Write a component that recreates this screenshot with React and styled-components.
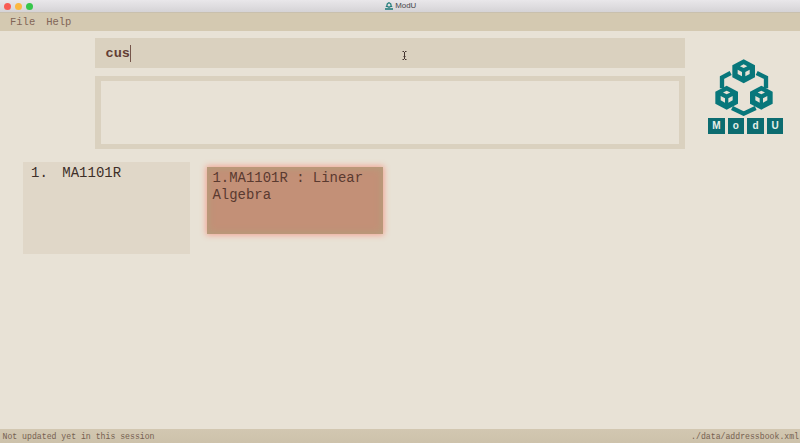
import React from 'react';
import styled, { createGlobalStyle } from 'styled-components';

const GlobalStyle = createGlobalStyle`
  * { box-sizing: border-box; }
  body { margin: 0; background: #e8e2d6; overflow: hidden; }
`;

const Window = styled.div`
  width: 800px;
  height: 443px;
  display: flex;
  flex-direction: column;
  background: #e8e2d6;
  font-family: 'Courier New', 'Liberation Mono', monospace;
`;

const TitleBar = styled.header`
  height: 12px;
  flex: none;
  display: grid;
  grid-template-columns: 1fr auto 1fr;
  align-items: center;
  padding: 0 4px;
  background: linear-gradient(#e9e7ea, #d5d3d6);
`;

const Lights = styled.div`
  display: flex;
  gap: 4px;
`;

const Light = styled.span`
  width: 7px;
  height: 7px;
  border-radius: 50%;
  background: ${(p) => p.$color};
`;

const Title = styled.div`
  display: flex;
  align-items: center;
  gap: 2.5px;
  color: #47464a;
  font: 7.9px/12px 'Liberation Sans', Arial, sans-serif;
  padding: 0 0 0 1px;
`;

const MenuBar = styled.nav`
  height: 19px;
  flex: none;
  display: flex;
  gap: 11px;
  padding-left: 10px;
  background: #d4c9b1;
  border-top: 1px solid #c9c0ae;
`;

const MenuItem = styled.span`
  font-size: 10.5px;
  line-height: 18px;
  color: #826657;
`;

const Top = styled.section`
  display: grid;
  grid-template-columns: 590px auto;
  column-gap: 23.5px;
  padding: 7px 0 0 95px;
  flex: none;
`;

const Console = styled.div`
  display: flex;
  flex-direction: column;
  gap: 8px;
`;

const CommandField = styled.div`
  height: 29.5px;
  display: flex;
  align-items: center;
  justify-content: space-between;
  padding: 0 278.5px 0 10.5px;
  background: #dad1bf;
`;

const Command = styled.span`
  margin-top: 1px;
  font-size: 13.6px;
  font-weight: 700;
  line-height: 17px;
  color: #633e34;
  border-right: 1px solid #76564b;
`;

const IBeam = styled.svg`
  margin-top: 5px;
`;

const Result = styled.div`
  height: 73px;
  border: solid #dad1bf;
  border-width: 5px 6px;
`;

const Brand = styled.div`
  padding-top: 21px;
`;

const Mark = styled.svg`
  display: block;
  margin-left: 6.5px;
`;

const Tiles = styled.div`
  display: flex;
  gap: 3px;
  margin: 2px 0 0 -0.5px;
`;

const Tile = styled.span`
  width: 16.6px;
  height: 15.5px;
  background: #0c6c70;
  color: #e8f0e9;
  text-align: center;
  font: 700 10px/16px 'Liberation Sans', Arial, sans-serif;
`;

const Content = styled.main`
  flex: 1;
  display: flex;
  align-items: flex-start;
  gap: 17px;
  padding: 13px 0 0 23px;
`;

const ListCard = styled.div`
  width: 167px;
  height: 92px;
  display: flex;
  gap: 14.5px;
  padding: 2px 8px;
  background: #e0d7c8;
  color: #3d2f28;
  font-size: 14px;
  line-height: 18px;
`;

const ModuleCard = styled.div`
  width: 176px;
  height: 67px;
  margin-top: 5px;
  padding: 3px 5.5px;
  background: #c39077;
  color: #5a3a30;
  font-size: 13.95px;
  line-height: 17.5px;
  box-shadow: 0 0 6px 1px #f3a392, inset 0 0 6px 2px #b59c7b;
`;

const StatusBar = styled.footer`
  height: 14px;
  flex: none;
  display: flex;
  justify-content: space-between;
  padding: 0 1px 0 2.5px;
  background: linear-gradient(#d2c7b1, #cdc2ab);
  color: #756050;
  font-size: 8.18px;
  line-height: 16px;
`;

function Cube({ x, y }) {
  return (
    <g transform={`translate(${x} ${y})`}>
      <path fill="#08777b" d="M0-36 34-18V18L0 36-34 18V-18Z" />
      <path fill="#e8e2d6" d="M0-21 11-15.5 0-10-11-15.5Z M-18-5-5 2V15L-18 8Z M18-5 5 2V15L18 8Z" />
    </g>
  );
}

function Logo() {
  return (
    <Mark width="58" height="57" viewBox="46 28 174 171">
      <path
        fill="none"
        stroke="#08777b"
        strokeWidth="13"
        d="M93 70 67 84V116M171 70 199 84V116M97 175 132 192 168 175"
      />
      <Cube x={132} y={65} />
      <Cube x={81} y={144} />
      <Cube x={185} y={144} />
    </Mark>
  );
}

function TitleIcon() {
  return (
    <svg width="8" height="8" viewBox="0 0 8 8" fill="none" stroke="#267f7d">
      <path strokeWidth="1.3" d="M4 .7 5.7 1.8 6.2 4.2 4 5.3 1.8 4.2 2.3 1.8Z" />
      <path strokeWidth="1.6" d="M0 7H8" />
      <path strokeWidth="1.2" d="M.8 4.5H3M5 4.5H7.2" />
    </svg>
  );
}

export default function App() {
  return (
    <Window>
      <GlobalStyle />
      <TitleBar>
        <Lights>
          <Light $color="#f95c55" />
          <Light $color="#fbb83f" />
          <Light $color="#35c64b" />
        </Lights>
        <Title>
          <TitleIcon />
          ModU
        </Title>
      </TitleBar>
      <MenuBar>
        <MenuItem>File</MenuItem>
        <MenuItem>Help</MenuItem>
      </MenuBar>
      <Top>
        <Console>
          <CommandField>
            <Command>cus</Command>
            <IBeam width="5" height="9" viewBox="0 0 5 9" fill="none" stroke="#44342f">
              <path d="M.5.5H2M3 .5H4.5M2.5 1V8M.5 8.5H2M3 8.5H4.5M1.5 5.5H3.5" />
            </IBeam>
          </CommandField>
          <Result />
        </Console>
        <Brand>
          <Logo />
          <Tiles>
            {['M', 'o', 'd', 'U'].map((letter) => (
              <Tile key={letter}>{letter}</Tile>
            ))}
          </Tiles>
        </Brand>
      </Top>
      <Content>
        <ListCard>
          <span>1.</span>
          <span>MA1101R</span>
        </ListCard>
        <ModuleCard>1.MA1101R : Linear Algebra</ModuleCard>
      </Content>
      <StatusBar>
        <span>Not updated yet in this session</span>
        <span>./data/addressbook.xml</span>
      </StatusBar>
    </Window>
  );
}
